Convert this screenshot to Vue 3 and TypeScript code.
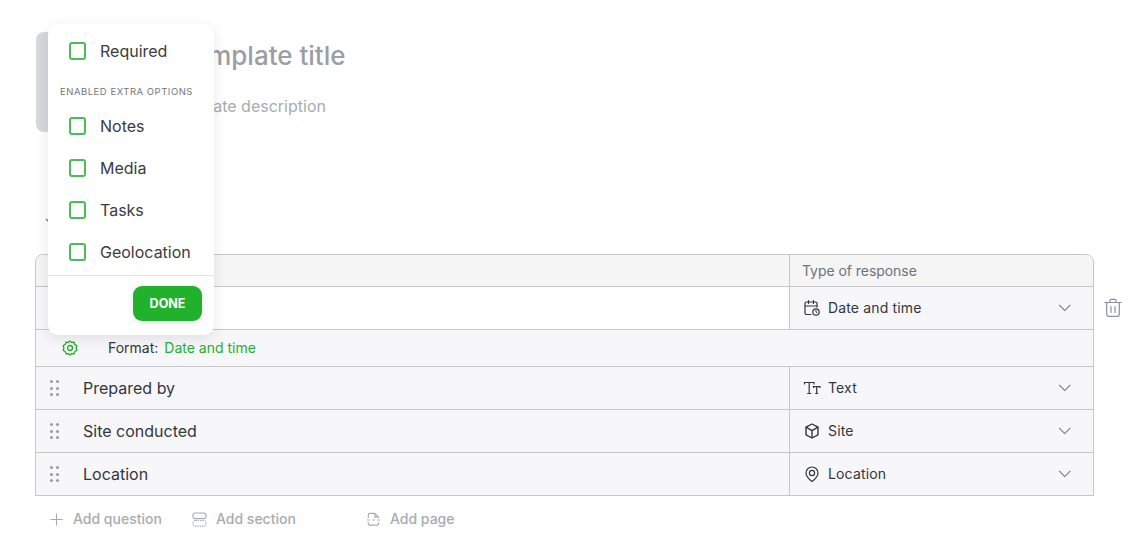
<script setup lang="ts">
const options = ['Notes', 'Media', 'Tasks', 'Geolocation']
const rows = [
  { label: 'Prepared by', type: 'Text', icon: 'text' },
  { label: 'Site conducted', type: 'Site', icon: 'site' },
  { label: 'Location', type: 'Location', icon: 'location' },
]
</script>

<template>
  <div class="page">
    <header class="head">
      <div class="logo"></div>
      <div class="titles">
        <div class="title">Add template title</div>
        <div class="desc">Add template description</div>
      </div>
    </header>
    <div class="tick-row">
      <svg class="tick" width="12" height="12" viewBox="0 0 12 12" fill="none"><path d="M1 4l5 5 5-5" stroke="#6b6e76" stroke-width="1.2"/></svg>
    </div>

    <div class="table-wrap">
      <div class="table">
        <div class="row head-row">
          <div class="cell-main"></div>
          <div class="cell-type head-type">Type of response</div>
        </div>
        <div class="row q-row">
          <div class="cell-main input-cell">
            <div class="grip-slot"></div>
            <div class="white-input"></div>
          </div>
          <div class="cell-type">
            <svg class="ticon" viewBox="0 0 18 18" fill="none" stroke="#33363d" stroke-width="1.2" stroke-linecap="round" stroke-linejoin="round">
              <path d="M8 15.500H3.500A1.500 1.500 0 0 1 2 14V4.500A1.500 1.500 0 0 1 3.500 3h9A1.500 1.500 0 0 1 14 4.500V8"/>
              <path d="M2 7h12M5.500 1.500v3M10.500 1.500v3"/>
              <circle cx="13" cy="13" r="3.200"/>
              <path d="M13 11.500V13l1 .7" stroke-width="1"/>
            </svg>
            <span class="type-label">Date and time</span>
            <svg class="chev" viewBox="0 0 14 8" fill="none"><path d="M1 1l6 6 6-6" stroke="#6f7279" stroke-width="1.1"/></svg>
          </div>
        </div>
        <div class="row format-row">
          <svg class="gear" viewBox="0 0 24 24" fill="none" stroke="#21b12c" stroke-width="1.800" stroke-linejoin="round">
            <path d="M12 2.500l2.300 2.100 3.100-.3 1 3 2.700 1.600-.9 3.100.9 3.100-2.700 1.600-1 3-3.100-.3L12 21.500l-2.300-2.100-3.100.3-1-3-2.700-1.600.9-3.100-.9-3.100 2.700-1.600 1-3 3.100.3z"/>
            <circle cx="12" cy="12" r="3.300"/>
          </svg>
          <span class="format-label">Format:</span>
          <span class="format-value">Date and time</span>
        </div>
        <div v-for="r in rows" :key="r.label" class="row q-row">
          <div class="cell-main">
            <div class="grip-slot">
              <span class="grip"><i v-for="n in 6" :key="n"></i></span>
            </div>
            <span class="q-label">{{ r.label }}</span>
          </div>
          <div class="cell-type">
            <svg v-if="r.icon === 'text'" class="ticon" viewBox="0 0 18 18" fill="none" stroke="#33363d" stroke-width="1.2" stroke-linecap="round">
              <path d="M1.500 5V3.500h9.500V5M6.200 3.500V14.500M4.700 14.500h3"/>
              <path d="M10.500 8.500V7.700h6.500v.8M13.700 7.700v6.800M12.700 14.500h2"/>
            </svg>
            <svg v-else-if="r.icon === 'site'" class="ticon" viewBox="0 0 18 18" fill="none" stroke="#33363d" stroke-width="1.400" stroke-linejoin="round">
              <path d="M9 2l6 3.200v7.600L9 16l-6-3.200V5.200z"/>
              <path d="M3 5.200l6 3.400 6-3.400M9 8.600V16"/>
            </svg>
            <svg v-else class="ticon" viewBox="0 0 18 18" fill="none" stroke="#33363d" stroke-width="1.200">
              <path d="M9 16.500c-3.200-2.400-6-5-6-8.500a6 6 0 0 1 12 0c0 3.500-2.800 6.100-6 8.500z" stroke-linejoin="round"/>
              <circle cx="9" cy="8" r="2.600"/>
            </svg>
            <span class="type-label">{{ r.type }}</span>
            <svg class="chev" viewBox="0 0 14 8" fill="none"><path d="M1 1l6 6 6-6" stroke="#6f7279" stroke-width="1.1"/></svg>
          </div>
        </div>
      </div>
      <svg class="trash" viewBox="0 0 18 20" fill="none" stroke="#8d9096" stroke-width="1.200" stroke-linecap="round" stroke-linejoin="round">
        <path d="M1 4.500h16M6 4.500V2.500A1.200 1.200 0 0 1 7.200 1.300h3.600A1.200 1.200 0 0 1 12 2.500v2"/>
        <path d="M2.700 4.500v11.800a2 2 0 0 0 2 2h8.600a2 2 0 0 0 2-2V4.500"/>
        <path d="M7 8.500v6M11 8.500v6"/>
      </svg>
    </div>

    <div class="adds">
      <div class="add add-q">
        <svg class="aicon" viewBox="0 0 16 16" fill="none" stroke="#a9abb0" stroke-width="1.200"><path d="M8 1.500v13M1.500 8h13"/></svg>
        <span>Add question</span>
      </div>
      <div class="add add-s">
        <svg class="aicon" viewBox="0 0 16 16" fill="none" stroke="#a9abb0" stroke-width="1.200">
          <rect x="1" y="1" width="14" height="6" rx="2.500"/>
          <rect x="1" y="9" width="14" height="6" rx="2.500" stroke-dasharray="1.500 1"/>
        </svg>
        <span>Add section</span>
      </div>
      <div class="add add-p">
        <svg class="aicon" viewBox="0 0 16 16" fill="none" stroke="#a9abb0" stroke-width="1.200" stroke-linejoin="round">
          <path d="M2.500 6V3A1.500 1.500 0 0 1 4 1.500h5.500L13.500 5.500V6M9.500 1.500v4h4"/>
          <path d="M1 8.500h3M6.500 8.500h3M12 8.500h3"/>
          <path d="M2.500 11v1.500A1.500 1.500 0 0 0 4 14h8a1.500 1.500 0 0 0 1.500-1.500V11"/>
        </svg>
        <span>Add page</span>
      </div>
    </div>

    <div class="popover">
      <label class="opt required"><span class="box"></span><span>Required</span></label>
      <div class="section-label">ENABLED EXTRA OPTIONS</div>
      <label v-for="o in options" :key="o" class="opt"><span class="box"></span><span>{{ o }}</span></label>
      <div class="pop-foot">
        <button class="done" type="button">DONE</button>
      </div>
    </div>
  </div>
</template>

<style>
html, body { margin: 0; background: #fff; }
</style>

<style scoped>
.page {
  position: relative;
  width: 1133px;
  height: 544px;
  overflow: hidden;
  box-sizing: border-box;
  padding: 32px 0 0 35px;
  font-family: Inter, "Liberation Sans", sans-serif;
  color: #33363d;
  background: #fff;
}
.head { display: flex; gap: 10px; height: 100px; margin-left: 1px; }
.logo { width: 81px; height: 100px; border-radius: 8px; background: #d6d8dd; }
.titles { display: flex; flex-direction: column; padding-top: 6px; }
.title { font-size: 26px; line-height: 36px; font-weight: 500; color: #9c9ea5; white-space: nowrap; }
.desc { margin-top: 22px; padding-left: 9px; font-size: 16px; line-height: 20px; color: #a9abb0; white-space: nowrap; }
.tick-row { height: 122px; position: relative; }
.tick { position: absolute; left: 10px; top: 83px; }
.table-wrap { position: relative; width: 1059px; }
.table { border: 1px solid #c6c7cc; border-radius: 8px 8px 0 0; background: #f7f7f9; overflow: hidden; }
.row { display: flex; }
.row + .row { border-top: 1px solid #c6c7cc; }
.head-row { height: 31px; background: #f5f5f6; }
.q-row { height: 42px; }
.format-row { height: 36px; align-items: center; padding-left: 25px; font-size: 14px; }
.cell-main { width: 753px; display: flex; align-items: center; }
.cell-type { flex: 1; display: flex; align-items: center; border-left: 1px solid #c6c7cc; padding: 0 21px 0 13px; font-size: 14px; letter-spacing: .15px; }
.head-type { color: #6f7279; padding-left: 12px; letter-spacing: -.05px; }
.input-cell { align-items: stretch; }
.grip-slot { width: 47px; flex: none; display: flex; align-items: center; padding-left: 14px; box-sizing: border-box; }
.white-input { flex: 1; background: #fff; margin-left: -1px; }
.grip { display: grid; grid-template-columns: 3px 3px; gap: 3.500px 2.500px; }
.grip i { width: 3px; height: 3px; border-radius: 50%; background: #9a9ca3; }
.q-label { font-size: 16px; color: #33363d; }
.ticon { width: 18px; height: 18px; flex: none; }
.type-label { margin-left: 7px; margin-bottom: 2px; flex: 1; }
.chev { width: 13.500px; height: 7.500px; margin-right: 1px; }
.gear { width: 18px; height: 18px; flex: none; }
.format-label { margin-left: 29px; margin-bottom: 2px; color: #33363d; }
.format-value { margin-left: 6px; margin-bottom: 2px; color: #21b12c; }
.trash { position: absolute; left: 1069px; top: 44px; width: 18px; height: 20px; }
.adds { display: flex; margin-top: 13px; padding-left: 14px; font-size: 14px; font-weight: 500; color: #a9abb0; }
.add { display: flex; align-items: center; gap: 9px; line-height: 20px; }
.aicon { width: 15px; height: 15px; flex: none; }
.add-q { width: 143px; }
.add-s { width: 174px; }
.popover {
  position: absolute;
  left: 48px;
  top: 24px;
  width: 166px;
  height: 311px;
  box-sizing: border-box;
  background: #fff;
  border-radius: 10px;
  box-shadow: 0 4px 14px rgba(30, 32, 40, .1);
}
.opt { display: flex; align-items: center; height: 42px; padding-left: 20.500px; font-size: 16px; color: #3a3c42; gap: 14px; }
.required { height: 54px; }
.box { width: 13.500px; height: 13.500px; border: 2px solid #4cbd56; border-radius: 3px; flex: none; }
.section-label { font-size: 9.500px; line-height: 14px; letter-spacing: .52px; color: #73767d; padding: 7px 0 6px 12px; }
.pop-foot { border-top: 1px solid #e2e3e7; display: flex; justify-content: flex-end; padding: 10px 12px 0 0; margin-top: 2px; }
.done { width: 69px; height: 35px; border: 0; border-radius: 9px; background: #21b12c; color: #fff; font: 700 12.500px Inter, "Liberation Sans", sans-serif; box-shadow: 0 2px 6px rgba(30, 32, 40, .1); }
</style>
